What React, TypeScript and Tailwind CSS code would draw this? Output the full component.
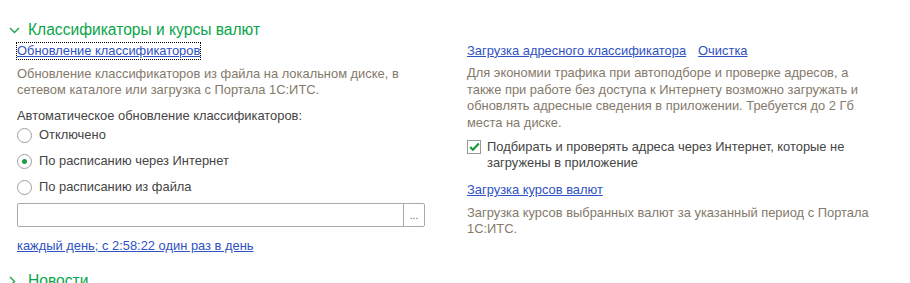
import React from 'react'

const Radio = ({ checked, label }: { checked?: boolean; label: string }) => (
  <div className="flex items-center h-[26px]">
    <div className="w-[15px] h-[15px] rounded-full border border-[#a0a0a0] bg-white flex items-center justify-center">
      {checked && <div className="w-[5px] h-[5px] rounded-full bg-[#1f9a45]" />}
    </div>
    <span className="ml-[7px] text-[#444]">{label}</span>
  </div>
)

const App = () => {
  return (
    <div
      className="w-[910px] h-[283px] overflow-hidden bg-white text-[12.9px] leading-[16px]"
      style={{ fontFamily: '"Liberation Sans", Arial, sans-serif' }}
    >
      {/* section header */}
      <div className="flex items-center pt-[19px] pl-[9px] h-[40px]">
        <svg width="11" height="7" viewBox="0 0 11 7" className="mt-[1px]">
          <path d="M1 1 L5.5 5.5 L10 1" fill="none" stroke="#1fa34a" strokeWidth="1.4" />
        </svg>
        <span className="ml-[8px] text-[15.6px] text-[#0aa54a]">Классификаторы и курсы валют</span>
      </div>

      <div className="flex gap-[42px] pl-[17px]">
        {/* left column */}
        <div className="w-[408px]">
          <div className="mt-[2px] h-[17px] flex items-center">
            <span className="outline outline-1 outline-dotted outline-black text-[#2f52c2] underline">
              Обновление классификаторов
            </span>
          </div>
          <p className="mt-[7px] text-[#85796b]">
            Обновление классификаторов из файла на локальном диске, в сетевом каталоге или загрузка с Портала 1С:ИТС.
          </p>
          <p className="mt-[10px] text-[#444]">Автоматическое обновление классификаторов:</p>
          <div className="-mt-[2px]">
            <Radio label="Отключено" />
            <Radio checked label="По расписанию через Интернет" />
            <Radio label="По расписанию из файла" />
          </div>
          <div className="mt-[3px] flex h-[24px] border border-[#a9a9a9] rounded-[2px]">
            <div className="flex-1" />
            <div className="w-[21px] border-l border-[#a9a9a9] flex items-end justify-center pb-[5px] text-[10px] leading-[10px] text-[#555]">
              ...
            </div>
          </div>
          <div className="mt-[11px] text-[#2f52c2] underline">каждый день; с 2:58:22 один раз в день</div>
        </div>

        {/* right column */}
        <div className="w-[408px]">
          <div className="mt-[2px] h-[17px] flex items-center gap-[12px]">
            <span className="text-[#2f52c2] underline">Загрузка адресного классификатора</span>
            <span className="text-[#2f52c2] underline">Очистка</span>
          </div>
          <p className="mt-[6px] text-[#85796b] leading-[16.5px] w-[400px]">
            Для экономии трафика при автоподборе и проверке адресов, а также при работе без доступа к Интернету возможно загружать и обновлять адресные сведения в приложении. Требуется до 2 Гб места на диске.
          </p>
          <div className="mt-[8px] flex items-start">
            <div className="w-[14px] h-[14px] border border-[#999] bg-white flex items-center justify-center shrink-0 mt-[1px]">
              <svg width="14" height="12" viewBox="0 0 14 12" className="-mt-[1px] ml-[1px]">
                <path d="M1.5 6 L5 9.5 L12.5 1.5" fill="none" stroke="#17963a" strokeWidth="2.8" />
              </svg>
            </div>
            <span className="ml-[6px] text-[#444] leading-[15.5px]">
              Подбирать и проверять адреса через Интернет, которые не
              <br />
              загружены в приложение
            </span>
          </div>
          <div className="mt-[12px] text-[#2f52c2] underline">Загрузка курсов валют</div>
          <p className="mt-[7px] text-[#85796b]">
            Загрузка курсов выбранных валют за указанный период с Портала 1С:ИТС.
          </p>
        </div>
      </div>

      {/* next section */}
      <div className="flex items-center pl-[9px] mt-[19px]">
        <svg width="7" height="11" viewBox="0 0 7 11">
          <path d="M1 1 L5.5 5.5 L1 10" fill="none" stroke="#1fa34a" strokeWidth="1.4" />
        </svg>
        <span className="ml-[12px] text-[15.6px] text-[#0aa54a]">Новости</span>
      </div>
    </div>
  )
}

export default App
